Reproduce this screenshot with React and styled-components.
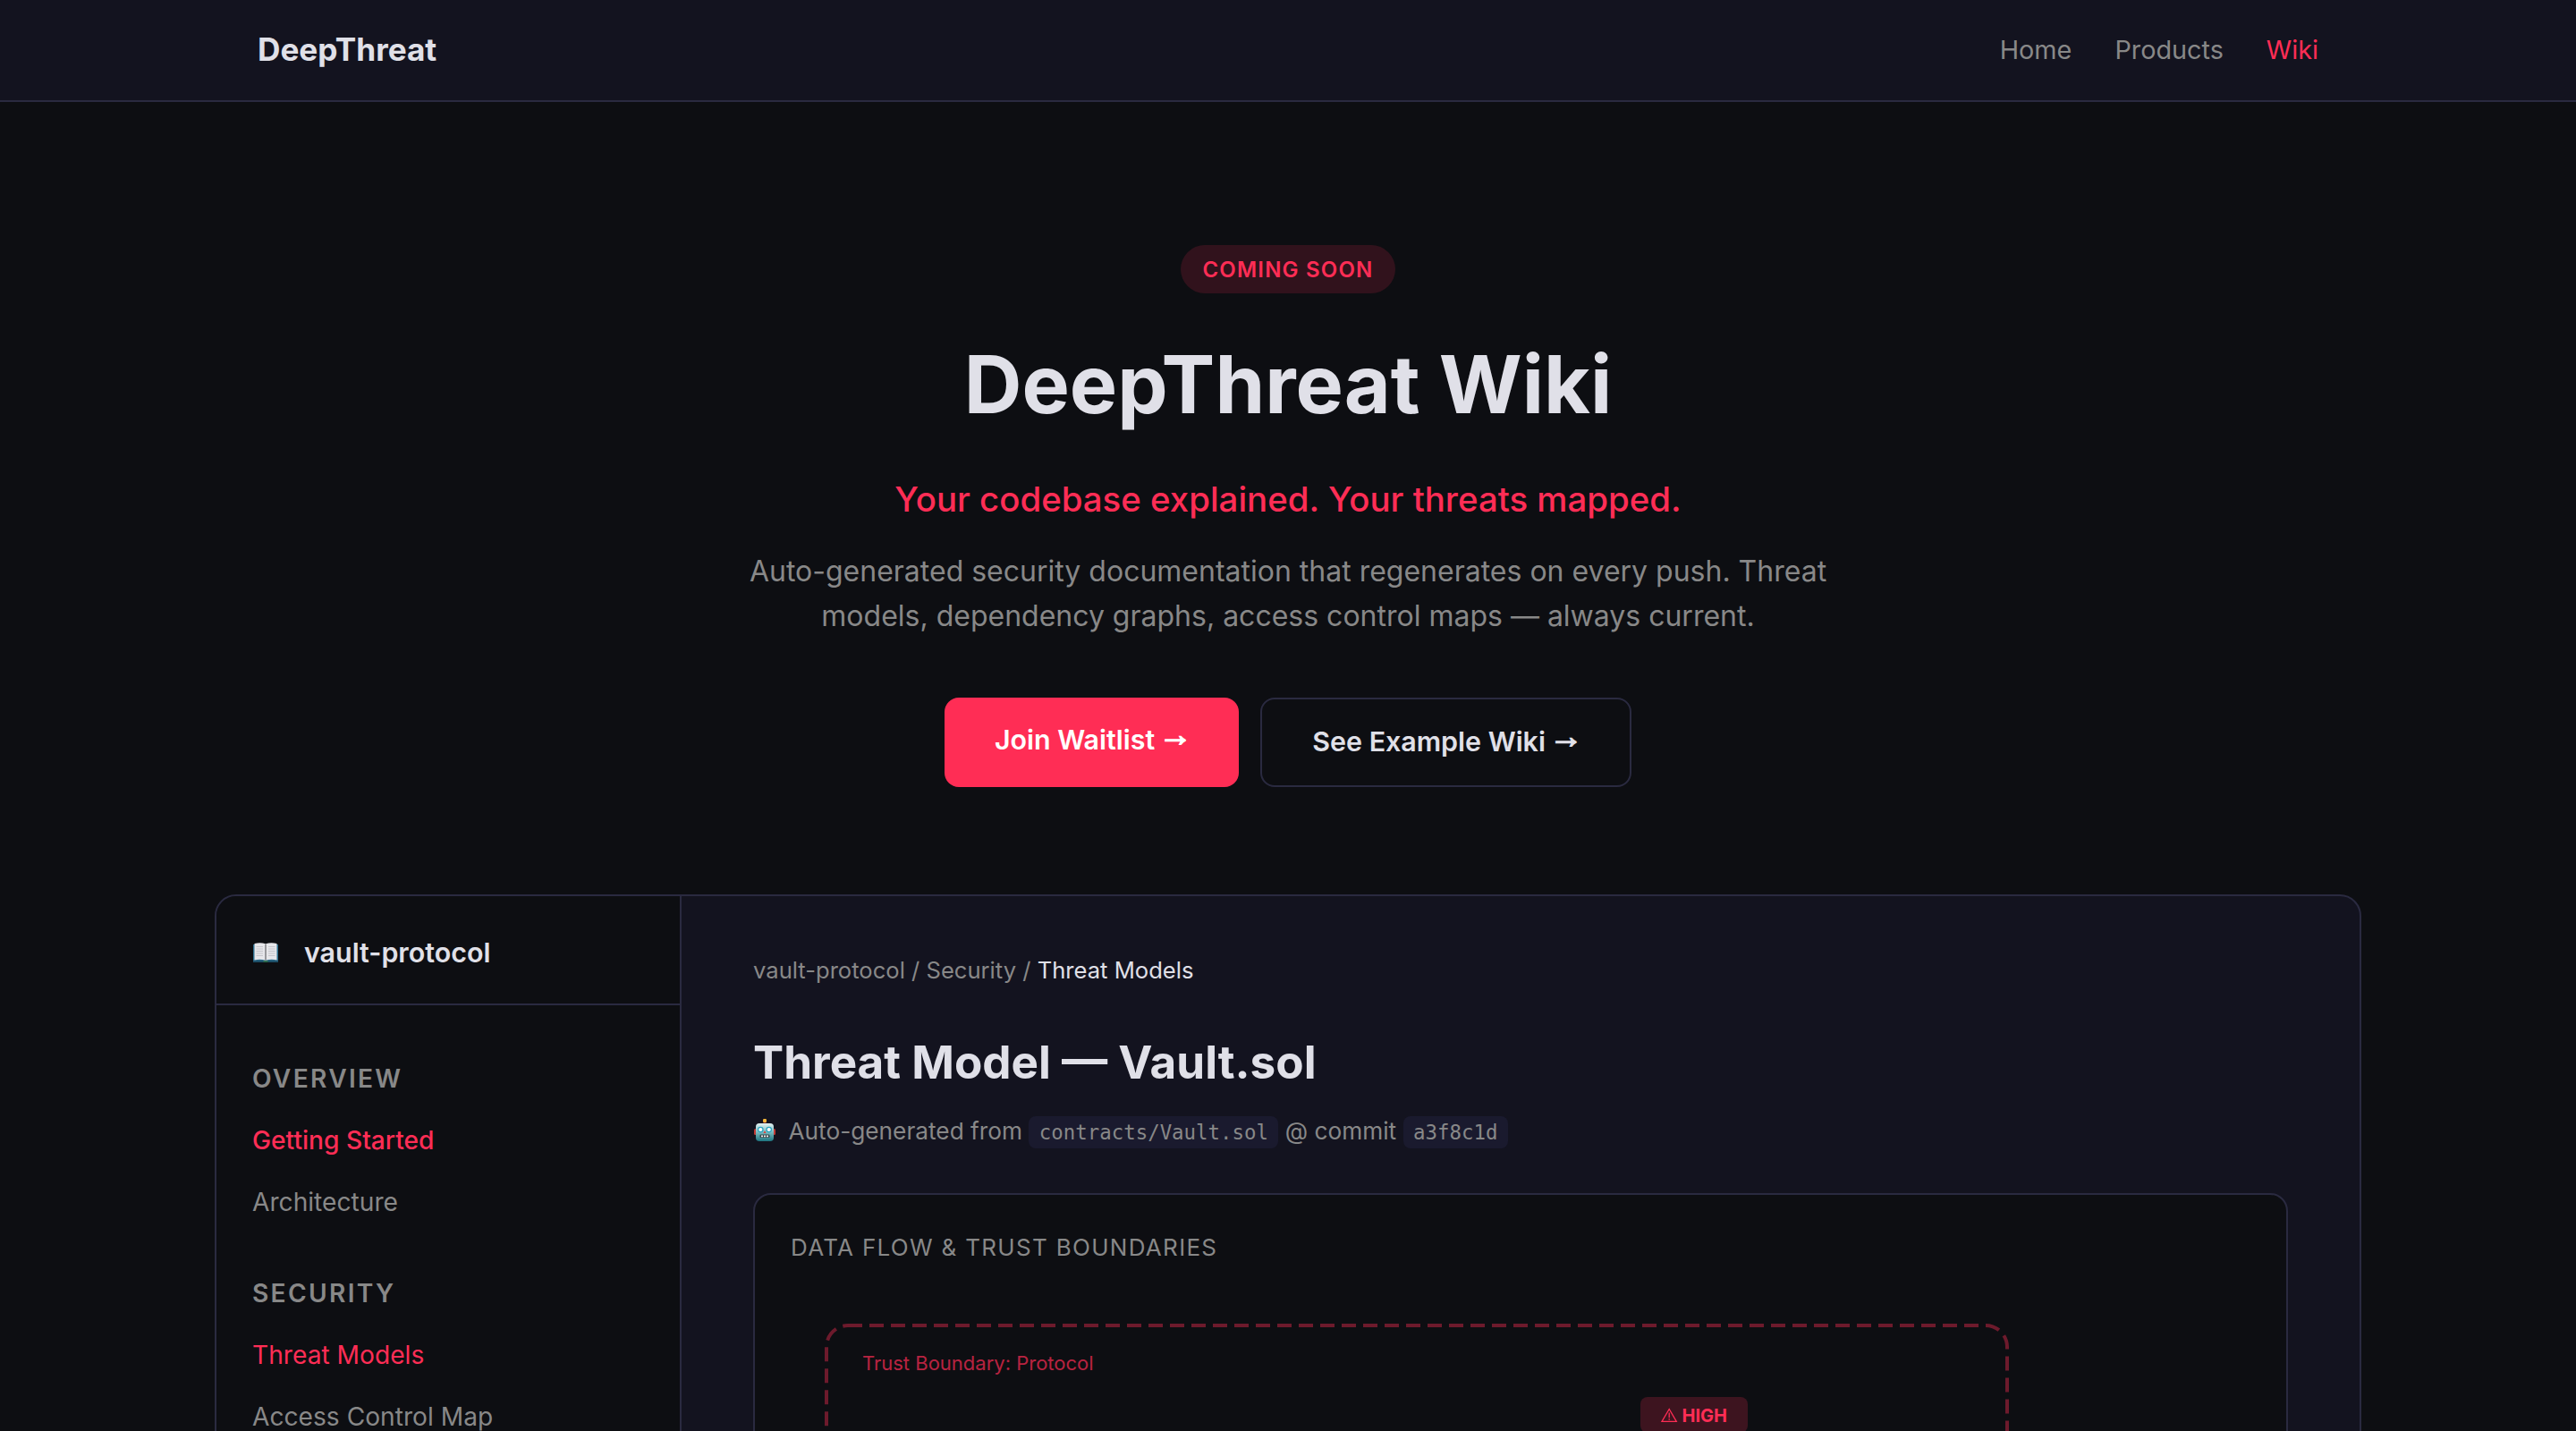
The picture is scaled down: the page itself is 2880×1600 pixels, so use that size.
import React from 'react';
import styled, { createGlobalStyle } from 'styled-components';

const GlobalStyle = createGlobalStyle`
  * {
    box-sizing: border-box;
    margin: 0;
    padding: 0;
  }

  body {
    background: #0d0e12;
    color: #e0e0e8;
    font-family: Inter, sans-serif;
    line-height: 1.6;
    overflow: hidden;
  }
`;

const sections = [
  {
    title: 'Overview',
    links: [
      { label: 'Getting Started', active: true, strong: true },
      { label: 'Architecture' },
    ],
  },
  {
    title: 'Security',
    links: [
      { label: 'Threat Models', active: true },
      { label: 'Access Control Map' },
    ],
  },
];

const BookIcon = () => (
  <svg width="28" height="22" viewBox="0 0 28 22">
    <path d="M0 2h28v20H0z" fill="#2f6f8f" />
    <path d="M0 20h28v2H0z" fill="#1d4f68" />
    <path d="M1.5 1Q8-.6 14 1.2v18.6Q8 18 1.5 19.4z" fill="#e6e6ea" />
    <path d="M26.5 1Q20-.6 14 1.2v18.6Q20 18 26.5 19.4z" fill="#e6e6ea" />
    <path
      d="M3.5 4.5h7.5M3.5 7h7.5M3.5 9.5h7.5M3.5 12h7.5M3.5 14.5h7.5M17 4.5h7.5M17 7h7.5M17 9.5h7.5M17 12h7.5M17 14.5h7.5"
      stroke="#c6c6cc"
      strokeWidth="1"
    />
    <path d="M14 1.5v18" stroke="#77777c" strokeWidth="1.4" />
    <path d="M11.5 20h5v2h-5z" fill="#2c6b4f" />
  </svg>
);

const RobotIcon = () => (
  <Robot width="24" height="25" viewBox="0 0 24 25">
    <defs>
      <linearGradient id="face" x1="0" y1="0" x2="0" y2="1">
        <stop offset="0" stopColor="#e4f3f3" />
        <stop offset="0.55" stopColor="#6fb3b9" />
        <stop offset="1" stopColor="#1d7480" />
      </linearGradient>
    </defs>
    <rect x="0" y="11" width="3" height="7" rx="1.5" fill="#c23a35" />
    <rect x="21" y="11" width="3" height="7" rx="1.5" fill="#c23a35" />
    <rect x="10.5" y="3" width="3" height="3" fill="#7d2f2a" />
    <rect x="10" y="0" width="4" height="4" rx="1.2" fill="#f3b53a" />
    <rect x="2" y="5" width="20" height="20" rx="4" fill="url(#face)" />
    <circle cx="7.3" cy="12" r="2.7" fill="#fff" stroke="#27a3bf" strokeWidth="1.2" />
    <circle cx="16.7" cy="12" r="2.7" fill="#fff" stroke="#27a3bf" strokeWidth="1.2" />
    <path d="M12 13l1.5 3h-3z" fill="#d8433c" />
    <rect x="6.5" y="17.5" width="11" height="3.6" rx="1.2" fill="#38494d" />
    <path d="M8 19.3h8" stroke="#eee" strokeWidth="1.8" strokeDasharray="2 1" />
  </Robot>
);

const App = () => {
  return (
    <Page>
      <GlobalStyle />
      <Nav>
        <NavInner>
          <Logo>DeepThreat</Logo>
          <NavLinks>
            <NavLink>Home</NavLink>
            <NavLink>Products</NavLink>
            <NavLink $active>Wiki</NavLink>
          </NavLinks>
        </NavInner>
      </Nav>

      <Hero>
        <Badge>Coming Soon</Badge>
        <Title>DeepThreat Wiki</Title>
        <Tagline>Your codebase explained. Your threats mapped.</Tagline>
        <Description>
          Auto-generated security documentation that regenerates on every push. Threat models,
          dependency graphs, access control maps — always current.
        </Description>
        <Actions>
          <Button $primary>Join Waitlist <Arrow>→</Arrow></Button>
          <Button>See Example Wiki <Arrow>→</Arrow></Button>
        </Actions>
      </Hero>

      <Wiki>
        <Sidebar>
          <SidebarHeader>
            <BookIcon />
            vault-protocol
          </SidebarHeader>
          {sections.map((section) => (
            <Section key={section.title}>
              <SectionTitle>{section.title}</SectionTitle>
              {section.links.map((link) => (
                <SideLink key={link.label} $active={link.active} $strong={link.strong}>
                  {link.label}
                </SideLink>
              ))}
            </Section>
          ))}
        </Sidebar>

        <Content>
          <Breadcrumb>
            vault-protocol / Security / <Current>Threat Models</Current>
          </Breadcrumb>
          <DocTitle>Threat Model — Vault.sol</DocTitle>
          <Meta>
            <RobotIcon />
            <span>
              Auto-generated from <Code>contracts/Vault.sol</Code> @ commit <Code>a3f8c1d</Code>
            </span>
          </Meta>
          <Diagram>
            <DiagramTitle>Data Flow &amp; Trust Boundaries</DiagramTitle>
            <Flow viewBox="0 0 1632 600">
              <rect
                x="40" y="40" width="1320" height="480" rx="24"
                fill="none" stroke="#ff2d55" strokeWidth="4" strokeDasharray="16 8" opacity="0.4"
              />
              <text x="80" y="90" fontSize="22" fill="#ff2d55" opacity="0.7">Trust Boundary: Protocol</text>
              <rect x="950" y="120" width="120" height="40" rx="8" fill="#ff2d55" opacity="0.2" />
              <path
                d="M982.2 133.5L990.3 147.3H974z M982.2 137.6v5.6 M982.2 144.2v1.6"
                fill="none" stroke="#ff2d55" strokeWidth="1.3"
              />
              <text x="996.5" y="148" fontSize="20" fontWeight="700" fill="#ff2d55">HIGH</text>
            </Flow>
          </Diagram>
        </Content>
      </Wiki>
    </Page>
  );
};

export default App;

const Page = styled.div`
  height: 1600px;
  overflow: hidden;
`;

const Nav = styled.nav`
  height: 114px;
  background: #13131f;
  border-bottom: 2px solid #2a2a40;
`;

const NavInner = styled.div`
  width: 2400px;
  height: 112px;
  margin: 0 auto;
  padding: 0 48px;
  display: flex;
  align-items: center;
  justify-content: space-between;
`;

const Logo = styled.div`
  padding-bottom: 2px;
  font-size: 35.2px;
  font-weight: 700;
  line-height: 56px;
`;

const NavLinks = styled.div`
  display: flex;
  gap: 48px;
`;

const NavLink = styled.a`
  padding-bottom: 1px;
  font-size: 28.8px;
  line-height: 45px;
  color: ${props => props.$active ? '#ff2d55' : '#888'};
`;

const Hero = styled.section`
  height: 886px;
  padding-top: 160px;
  display: flex;
  flex-direction: column;
  align-items: center;
  text-align: center;
`;

const Badge = styled.span`
  height: 54px;
  padding: 8px 24px;
  border-radius: 40px;
  background: rgba(255, 45, 85, 0.15);
  color: #ff2d55;
  font-size: 24px;
  font-weight: 600;
  line-height: 39px;
  letter-spacing: 0.05em;
  text-transform: uppercase;
`;

const Title = styled.h1`
  margin-top: 48px;
  font-size: 89.6px;
  font-weight: 700;
  line-height: 107px;
`;

const Tagline = styled.p`
  margin-top: 44px;
  color: #ff2d55;
  font-size: 38.4px;
  font-weight: 500;
  line-height: 62px;
`;

const Description = styled.p`
  width: 1240px;
  margin-top: 24.5px;
  color: #888;
  font-size: 32px;
  line-height: 50px;
`;

const Actions = styled.div`
  display: flex;
  gap: 24px;
  margin-top: 66.5px;
`;

const Button = styled.a`
  height: 100px;
  padding: 23px 56px;
  border: ${props => props.$primary ? 'none' : '2px solid #2a2a40'};
  border-radius: 16px;
  background: ${props => props.$primary ? '#ff2d55' : 'transparent'};
  color: ${props => props.$primary ? '#fff' : '#e0e0e8'};
  font-size: 30.4px;
  font-weight: 600;
  line-height: 48px;
  white-space: nowrap;
`;

const Arrow = styled.span`
  margin: 0 -3.5px;
  font-family: 'Liberation Sans', sans-serif;
  font-size: 37.5px;
  font-weight: 700;
  line-height: 0;
  vertical-align: 4px;
  -webkit-text-stroke: 1.5px currentColor;
`;

const Wiki = styled.section`
  display: flex;
  width: 2400px;
  height: 1200px;
  margin: 0 auto;
  border: 2px solid #2a2a40;
  border-radius: 24px;
  background: #13131f;
  overflow: hidden;
`;

const Sidebar = styled.aside`
  width: 520px;
  flex-shrink: 0;
  background: #0d0e12;
  border-right: 2px solid #2a2a40;
`;

const SidebarHeader = styled.div`
  display: flex;
  align-items: center;
  gap: 29px;
  height: 122px;
  margin-bottom: 60px;
  padding: 6px 41px 0;
  border-bottom: 2px solid #2a2a40;
  font-size: 30.4px;
  font-weight: 600;
`;

const Section = styled.div`
  padding: 0 40px;
  margin-bottom: 33.2px;
`;

const SectionTitle = styled.h4`
  height: 69px;
  color: #888;
  font-size: 28.16px;
  font-weight: 600;
  line-height: 44px;
  letter-spacing: 2.3px;
  text-transform: uppercase;
`;

const SideLink = styled.a`
  display: block;
  height: 68.8px;
  font-size: 28.16px;
  font-weight: ${props => props.$strong ? 500 : 400};
  line-height: 44px;
  color: ${props => props.$active ? '#ff2d55' : '#888'};
`;

const Content = styled.main`
  flex: 1;
  padding: 62px 80px;
`;

const Breadcrumb = styled.div`
  color: #888;
  font-size: 25.6px;
  line-height: 41px;
`;

const Current = styled.span`
  color: #e0e0e8;
`;

const DocTitle = styled.h2`
  margin-top: 41px;
  font-size: 51.2px;
  font-weight: 700;
  line-height: 82px;
`;

const Meta = styled.div`
  display: flex;
  align-items: center;
  gap: 14.5px;
  height: 41px;
  margin-top: 16px;
  color: #888;
  font-size: 26.24px;
  line-height: 41px;
`;

const Robot = styled.svg`
  margin: 0 0 2px 1px;
`;

const Code = styled.code`
  padding: 5px 11.5px;
  border-radius: 8px;
  background: #1a1a2e;
  font-family: 'DejaVu Sans Mono', monospace;
  font-size: 22.4px;
  line-height: 1;
`;

const Diagram = styled.div`
  margin-top: 49px;
  padding: 38px 40px;
  border: 2px solid #2a2a40;
  border-radius: 20px;
  background: #0d0e12;
`;

const DiagramTitle = styled.div`
  color: #888;
  font-size: 26px;
  line-height: 41px;
  letter-spacing: 0.05em;
  text-transform: uppercase;
`;

const Flow = styled.svg`
  display: block;
  width: 1632px;
  height: 600px;
  margin-top: 27px;
`;
